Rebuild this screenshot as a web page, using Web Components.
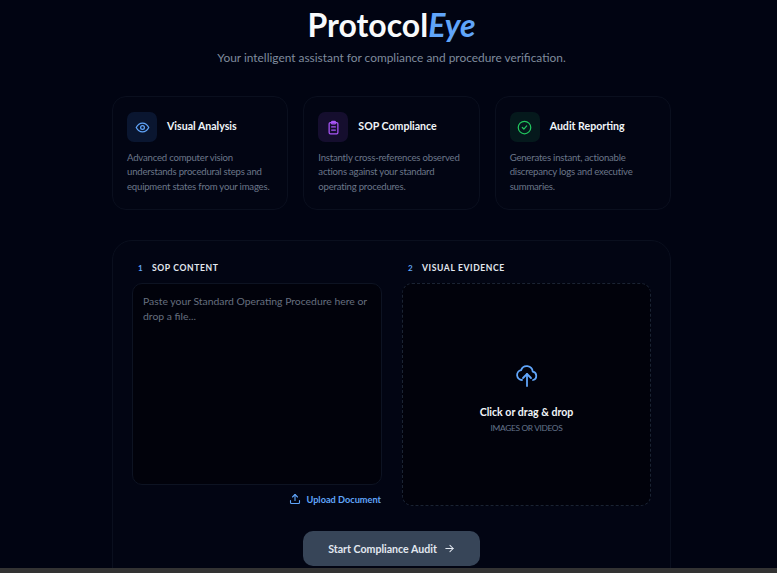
<!DOCTYPE html>
<html>
<head>
<meta charset="utf-8">
<title>ProtocolEye</title>
<style>
  html, body { margin: 0; height: 100%; overflow: hidden; background: #010412; }
  body { font-family: "Lato", "Noto Sans", sans-serif; }
</style>
</head>
<body>
<pe-app></pe-app>

<template id="card-tmpl">
  <style>
    :host { display: block; box-sizing: border-box; height: 114px; padding: 15px 14px; border: 1px solid #0a0f1e; border-radius: 14px; background: #020513; }
    .head { display: flex; align-items: center; gap: 10px; height: 30px; }
    .icon { width: 30px; height: 30px; border-radius: 7px; display: flex; align-items: center; justify-content: center; background: var(--tint); color: var(--ink); }
    .title { font-size: 10.6px; font-weight: 700; color: #f1f5f9; padding-bottom: 2px; }
    .body { margin-top: 9px; font-size: 9.6px; letter-spacing: -.22px; line-height: 14.4px; color: #6b7689; }
  </style>
  <div class="head">
    <div class="icon"><slot name="icon"></slot></div>
    <div class="title"><slot name="title"></slot></div>
  </div>
  <div class="body"><slot></slot></div>
</template>

<template id="step-tmpl">
  <style>
    :host { display: flex; align-items: center; height: 12px; padding-top: 1px; font-size: 8.6px; font-weight: 700; letter-spacing: .6px; color: #e2e8f0; text-transform: uppercase; }
    .num { width: 20px; padding-left: 6px; box-sizing: border-box; font-size: 8px; color: #60a5fa; letter-spacing: 0; }
  </style>
  <span class="num"><slot name="num"></slot></span><slot></slot>
</template>

<template id="app-tmpl">
  <style>
    :host { display: block; height: 573px; position: relative; overflow: hidden; color: #fff; }
    main { box-sizing: border-box; width: 783px; padding: 0 112px; }
    header { text-align: center; padding-top: 3px; height: 96px; box-sizing: border-box; }
    h1 { margin: 0; font-size: 32px; line-height: 43px; font-weight: 700; color: #f8fafc; }
    h1 em { color: #60a5fa; font-style: italic; }
    header p { margin: 4px 0 0; font-size: 11.9px; line-height: 16px; color: #7f8b9d; }
    .cards { display: grid; grid-template-columns: repeat(3, 1fr); gap: 15px; }
    .panel { box-sizing: border-box; margin-top: 30px; height: 360px; padding: 20px 19px 0; border: 1px solid #0a0f1e; border-radius: 20px; background: #020513; }
    .cols { display: grid; grid-template-columns: 250px 249px; gap: 20px; }
    .col { display: flex; flex-direction: column; gap: 9px; }
    .text { box-sizing: border-box; height: 202px; padding: 10px; border: 1px solid #0d1322; border-radius: 10px; background: #01020b; font-size: 10.4px; line-height: 15px; color: #666f7f; }
    .upload { display: flex; justify-content: flex-end; align-items: center; gap: 5px; padding-right: 1px; height: 20px; font-size: 9.2px; font-weight: 700; color: #60a5fa; }
    .drop { box-sizing: border-box; height: 223px; border: 1px dashed #1a2333; border-radius: 10px; background: #01020b; display: flex; flex-direction: column; align-items: center; padding-top: 79px; }
    .drop svg { display: block; }
    .drop b { margin-top: 18px; font-size: 10.6px; line-height: 14px; font-weight: 700; color: #f1f5f9; }
    .drop small { margin-top: 3px; font-size: 8.4px; line-height: 12px; color: #64748b; letter-spacing: -.35px; }
    .go { display: flex; justify-content: center; margin-top: 22px; }
    button { box-sizing: border-box; width: 177px; height: 35px; border: 0; border-radius: 10px; background: #374558; color: #e2e8f0; font: 700 10.6px "Lato", sans-serif; display: flex; align-items: center; justify-content: center; gap: 7px; padding: 0; }
    .strip { position: absolute; left: 0; right: 0; bottom: 0; height: 5px; background: #333; }
  </style>
  <main>
    <header>
      <h1>Protocol<em>Eye</em></h1>
      <p>Your intelligent assistant for compliance and procedure verification.</p>
    </header>
    <section class="cards">
      <pe-card style="--tint:#0a1630;--ink:#60a5fa">
        <svg slot="icon" width="15" height="15" viewBox="0 0 24 24" fill="none" stroke="currentColor" stroke-width="2" stroke-linecap="round" stroke-linejoin="round"><path d="M2 12s3.6-7 10-7 10 7 10 7-3.6 7-10 7-10-7-10-7z"/><circle cx="12" cy="12" r="3"/></svg>
        <span slot="title">Visual Analysis</span>
        Advanced computer vision understands procedural steps and equipment states from your images.
      </pe-card>
      <pe-card style="--tint:#150e2e;--ink:#a855f7">
        <svg slot="icon" width="15" height="15" viewBox="0 0 24 24" fill="none" stroke="currentColor" stroke-width="2" stroke-linecap="round" stroke-linejoin="round"><rect x="5" y="4" width="14" height="18" rx="2"/><rect x="9" y="2" width="6" height="4" rx="1"/><path d="M9 11h6M9 16h6"/></svg>
        <span slot="title">SOP Compliance</span>
        Instantly cross-references observed actions against your standard operating procedures.
      </pe-card>
      <pe-card style="--tint:#05191c;--ink:#22c55e">
        <svg slot="icon" width="15" height="15" viewBox="0 0 24 24" fill="none" stroke="currentColor" stroke-width="2" stroke-linecap="round" stroke-linejoin="round"><circle cx="12" cy="12" r="10"/><path d="M8.5 12l2.5 2.5 4.5-5"/></svg>
        <span slot="title">Audit Reporting</span>
        Generates instant, actionable discrepancy logs and executive summaries.
      </pe-card>
    </section>
    <section class="panel">
      <div class="cols">
        <div class="col">
          <pe-step><span slot="num">1</span>SOP Content</pe-step>
          <div>
            <div class="text">Paste your Standard Operating Procedure here or drop a file...</div>
            <div class="upload" style="margin-top:4px">
              <svg width="12" height="12" viewBox="0 0 24 24" fill="none" stroke="currentColor" stroke-width="2.2" stroke-linecap="round" stroke-linejoin="round"><path d="M3 15v4a2 2 0 0 0 2 2h14a2 2 0 0 0 2-2v-4"/><path d="M17 8l-5-5-5 5"/><path d="M12 3v12"/></svg>
              Upload Document
            </div>
          </div>
        </div>
        <div class="col">
          <pe-step><span slot="num">2</span>Visual Evidence</pe-step>
          <div class="drop">
            <svg width="24" height="24" viewBox="0 0 24 24" fill="none" stroke="#60a5fa" stroke-width="1.8" stroke-linecap="round" stroke-linejoin="round"><path d="M7 17a5 5 0 0 1-.9-9.9A6 6 0 0 1 17.7 8.6 4.3 4.3 0 0 1 18 17"/><path d="M12 23V11"/><path d="M8 15l4-4 4 4"/></svg>
            <b>Click or drag &amp; drop</b>
            <small>IMAGES OR VIDEOS</small>
          </div>
        </div>
      </div>
      <div class="go">
        <button>Start Compliance Audit
          <svg width="11" height="11" viewBox="0 0 24 24" fill="none" stroke="currentColor" stroke-width="2.2" stroke-linecap="round" stroke-linejoin="round"><path d="M4 12h16"/><path d="M13 5l7 7-7 7"/></svg>
        </button>
      </div>
    </section>
  </main>
  <div class="strip"></div>
</template>

<script>
  function fromTemplate(id) {
    return class extends HTMLElement {
      constructor() {
        super();
        this.attachShadow({ mode: "open" }).appendChild(document.getElementById(id).content.cloneNode(true));
      }
    };
  }
  customElements.define("pe-card", fromTemplate("card-tmpl"));
  customElements.define("pe-step", fromTemplate("step-tmpl"));
  customElements.define("pe-app", fromTemplate("app-tmpl"));
</script>
</body>
</html>
